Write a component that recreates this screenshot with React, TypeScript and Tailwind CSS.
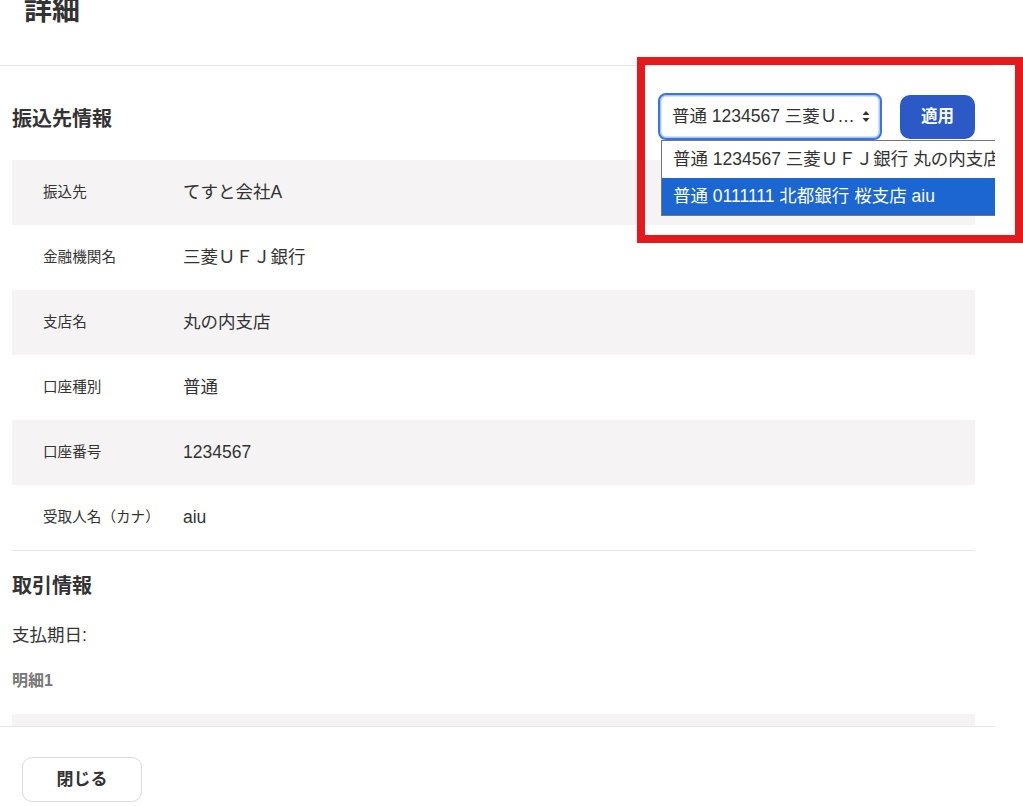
import React from "react";

interface Row {
  label: string;
  value: string;
}

const rows: Row[] = [
  { label: "振込先", value: "てすと会社A" },
  { label: "金融機関名", value: "三菱ＵＦＪ銀行" },
  { label: "支店名", value: "丸の内支店" },
  { label: "口座種別", value: "普通" },
  { label: "口座番号", value: "1234567" },
  { label: "受取人名（カナ）", value: "aiu" },
];

const options = [
  "普通 1234567 三菱ＵＦＪ銀行 丸の内支店 aiu",
  "普通 0111111 北都銀行 桜支店 aiu",
];

function SelectArrows() {
  return (
    <svg width="8" height="13" viewBox="0 0 8 13" className="shrink-0">
      <path d="M4 1 L7.5 5 L0.5 5 Z" fill="#333" />
      <path d="M4 12 L7.5 8 L0.5 8 Z" fill="#333" />
    </svg>
  );
}

export default function App() {
  return (
    <div
      className="relative h-[806px] w-[1023px] overflow-hidden bg-white text-[#333]"
      style={{ fontFamily: '"Liberation Sans", "Noto Sans CJK JP", sans-serif' }}
    >
      <div className="flex h-full w-[995px] flex-col">
        {/* ヘッダー */}
        <div className="h-[66px] shrink-0 border-b border-[#e6e6e6] px-6">
          <h1 className="-mt-[9px] text-[28px] font-bold leading-[40px] text-[#333]">詳細</h1>
        </div>

        {/* 本文 */}
        <div className="flex-1 overflow-hidden pl-3 pr-5">
          <div className="mt-[27px] mb-[20px] flex h-[47px] items-center justify-between">
            <h2 className="pt-[4px] text-[20px] font-bold">振込先情報</h2>
            <div className="flex items-center gap-[18px]">
              <div className="relative">
                <div className="flex h-[47px] w-[224px] items-center rounded-[8px] border-2 border-[#3b74e0] bg-white pl-[12px] pr-[10px] shadow-[inset_0_0_0_1.5px_#a9c6f7]">
                  <span className="flex-1 truncate whitespace-nowrap text-[17.5px] leading-none">普通 1234567 三菱Ｕ…</span>
                  <SelectArrows />
                </div>
                <div className="absolute left-[3px] top-[47px] z-10 w-[360px] border border-[#767676] bg-white">
                  <div className="flex h-[37px] items-center whitespace-nowrap px-[11px] text-[17.5px]">
                    {options[0]}
                  </div>
                  <div className="flex h-[37px] items-center whitespace-nowrap bg-[#1b66d0] px-[11px] text-[17.5px] text-white">
                    {options[1]}
                  </div>
                </div>
              </div>
              <button className="h-[44px] w-[75px] rounded-[10px] bg-[#2b5ac6] text-[16.5px] font-bold text-white">
                適用
              </button>
            </div>
          </div>

          <div className="border-b border-[#e6e6e6]">
            {rows.map((row, i) => (
              <div
                key={row.label}
                className={`flex h-[65px] items-center ${i % 2 === 0 ? "bg-[#f5f3f3]" : "bg-white"}`}
              >
                <div className="w-[171px] pl-[31px] text-[14.6px]">{row.label}</div>
                <div className="text-[17.5px]">{row.value}</div>
              </div>
            ))}
          </div>

          <h2 className="mt-[22px] text-[20px] font-bold leading-[26px]">取引情報</h2>
          <p className="mt-[24px] text-[17.5px] leading-[24px]">支払期日:</p>
          <p className="mt-[24px] text-[16px] font-bold leading-[20px] text-[#777]">明細1</p>
          <div className="mt-[23px] h-[65px] bg-[#f5f3f3]" />
        </div>

        {/* フッター */}
        <div className="h-[80px] shrink-0 border-t border-[#e6e6e6] pl-[22px] pt-[30px]">
          <button className="h-[45px] w-[120px] rounded-[10px] border border-[#dcdcdc] bg-white text-[17px] font-bold text-[#333]">
            閉じる
          </button>
        </div>
      </div>

      {/* 注釈枠 */}
      <div className="pointer-events-none absolute left-[637px] top-[57px] h-[186px] w-[386px] border-[8px] border-[#e3191b]" />
    </div>
  );
}
